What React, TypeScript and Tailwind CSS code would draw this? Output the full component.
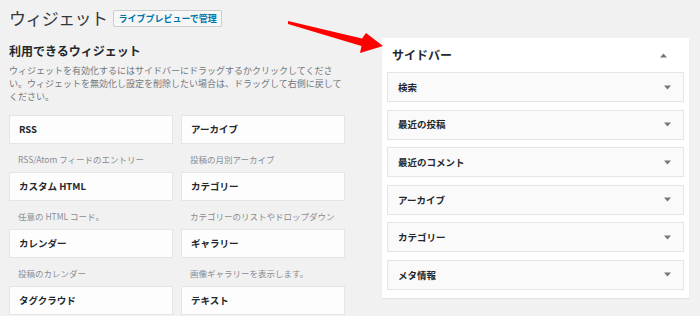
import React from "react";

const font = {
  fontFamily: '"Noto Sans CJK JP", "Noto Sans", "Liberation Sans", sans-serif',
};

const widgets: [string, string][] = [
  ["RSS", "RSS/Atom フィードのエントリー"],
  ["アーカイブ", "投稿の月別アーカイブ"],
  ["カスタム HTML", "任意の HTML コード。"],
  ["カテゴリー", "カテゴリーのリストやドロップダウン"],
  ["カレンダー", "投稿のカレンダー"],
  ["ギャラリー", "画像ギャラリーを表示します。"],
  ["タグクラウド", ""],
  ["テキスト", ""],
];

const sidebarItems = ["検索", "最近の投稿", "最近のコメント", "アーカイブ", "カテゴリー", "メタ情報"];

function TriDown() {
  return (
    <svg width="7" height="5" viewBox="0 0 7 5" className="shrink-0">
      <path d="M0 0.5 H7 L3.5 4.5 Z" fill="#72777c" />
    </svg>
  );
}
function TriUp() {
  return (
    <svg width="7" height="5" viewBox="0 0 7 5" className="shrink-0">
      <path d="M0 4.5 H7 L3.5 0.5 Z" fill="#72777c" />
    </svg>
  );
}

export default function App() {
  return (
    <div className="relative w-[700px] h-[316px] overflow-hidden bg-[#f1f1f1] text-[#23282d]" style={font}>
      <div className="flex items-start">
        {/* left column */}
        <div className="w-[345px] pl-[9px] pt-[7px] shrink-0">
          <div className="flex items-center gap-[6px] h-[22px]">
            <h1 className="text-[17px] font-normal leading-[22px] text-[#32373c] tracking-[-0.6px]">ウィジェット</h1>
            <div className="h-[17px] px-[4px] flex items-center border border-[#cccccc] bg-[#f7f7f7] rounded-[2px] text-[9px] font-semibold text-[#0073aa] leading-none">
              ライブプレビューで管理
            </div>
          </div>
          <h2 className="mt-[14px] text-[12px] font-bold leading-[16px] text-[#23282d]">利用できるウィジェット</h2>
          <p className="mt-[5px] text-[9px] leading-[13px] text-[#72777c] pr-[2px]">
            ウィジェットを有効化するにはサイドバーにドラッグするかクリックしてください。ウィジェットを無効化し設定を削除したい場合は、ドラッグして右側に戻してください。
          </p>
          <div className="mt-[12px] grid grid-cols-2 gap-x-[8px]">
            {widgets.map(([t, d]) => (
              <div key={t} className="h-[57px]">
                <div className="h-[29px] bg-[#fdfdfd] border border-[#e5e5e5] flex items-center px-[9px] text-[9.5px] font-bold text-[#23282d]">
                  {t}
                </div>
                <div className="pl-[9px] pt-[9px] text-[8.5px] leading-[12px] text-[#8a8d91]">{d}</div>
              </div>
            ))}
          </div>
        </div>

        {/* right column */}
        <div className="ml-[37px] mt-[38px] w-[307px] bg-white shadow-[0_1px_1px_rgba(0,0,0,0.06)] px-[5px] pb-[8px]">
          <div className="h-[34px] flex items-center justify-between pl-[5px] pr-[17px]">
            <span className="text-[12px] font-bold text-[#23282d]">サイドバー</span>
            <TriUp />
          </div>
          <div className="flex flex-col gap-[7.6px]">
            {sidebarItems.map((s) => (
              <div
                key={s}
                className="h-[30px] bg-[#fafafa] border border-[#e5e5e5] flex items-center justify-between pl-[10px] pr-[12px] text-[9.5px] font-semibold text-[#23282d]"
              >
                <span>{s}</span>
                <TriDown />
              </div>
            ))}
          </div>
        </div>
      </div>

      {/* red arrow overlay */}
      <svg className="absolute left-0 top-0 pointer-events-none" width="700" height="316">
        <path d="M288 21 L362 38.5 L366 33 L383 46 L360 53 L361.5 46 L288 24 Z" fill="#ff0000" />
      </svg>
    </div>
  );
}
